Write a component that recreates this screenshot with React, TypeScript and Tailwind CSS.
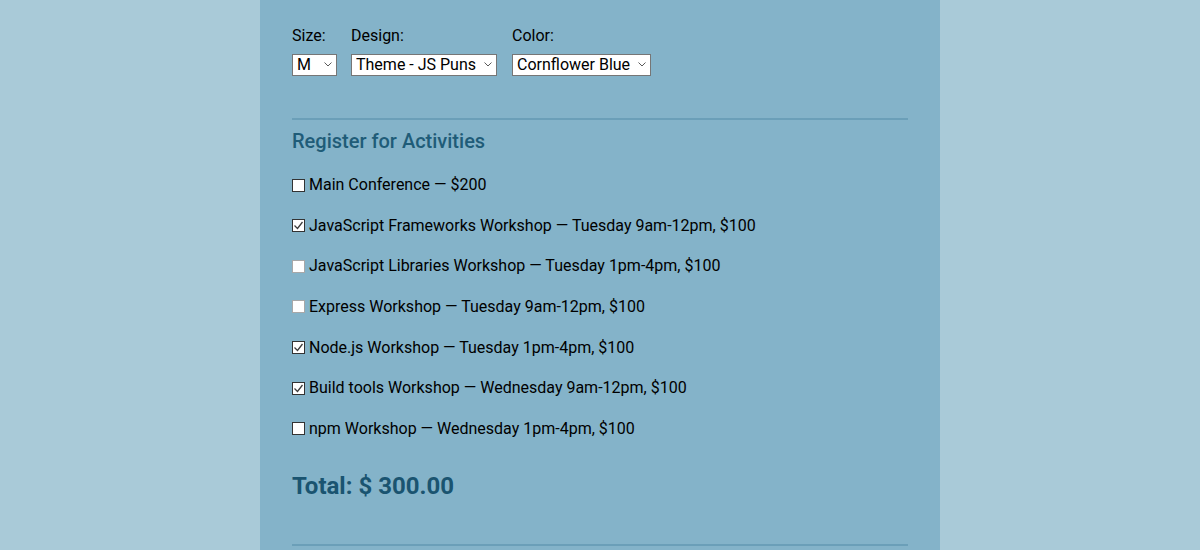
import type { ReactNode } from 'react'

type Activity = {
  id: string
  label: string
  checked: boolean
  dim?: boolean
}

const activities: Activity[] = [
  { id: 'all', label: 'Main Conference — $200', checked: false },
  { id: 'js-frameworks', label: 'JavaScript Frameworks Workshop — Tuesday 9am-12pm, $100', checked: true },
  { id: 'js-libs', label: 'JavaScript Libraries Workshop — Tuesday 1pm-4pm, $100', checked: false, dim: true },
  { id: 'express', label: 'Express Workshop — Tuesday 9am-12pm, $100', checked: false, dim: true },
  { id: 'node', label: 'Node.js Workshop — Tuesday 1pm-4pm, $100', checked: true },
  { id: 'build-tools', label: 'Build tools Workshop — Wednesday 9am-12pm, $100', checked: true },
  { id: 'npm', label: 'npm Workshop — Wednesday 1pm-4pm, $100', checked: false },
]

function Field({ label, width, children }: { label: string; width: string; children: ReactNode }) {
  return (
    <div className="flex flex-col">
      <label className="h-[18px] text-base leading-[18px] text-black">{label}</label>
      <div className={`relative mt-[8px] ${width}`}>
        <select className="h-[22px] w-full appearance-none border border-[#767676] bg-white pl-[4px] text-base leading-[20px] text-black">
          {children}
        </select>
        <svg className="pointer-events-none absolute right-[5px] top-[9px]" width="8" height="5" viewBox="0 0 8 5" fill="none">
          <path d="M0.5 0.5 L4 4 L7.5 0.5" stroke="#5a5a5a" strokeWidth="1" />
        </svg>
      </div>
    </div>
  )
}

function ActivityRow({ activity }: { activity: Activity }) {
  return (
    <label className="flex h-[24px] items-center gap-[4px] text-base text-black">
      <span
        className={`flex h-[13px] w-[13px] shrink-0 items-center justify-center border bg-white ${
          activity.dim ? 'border-[#a8a8a8]' : 'border-[#333333]'
        }`}
      >
        {activity.checked && (
          <svg width="11" height="11" viewBox="0 0 11 11" fill="none">
            <path d="M1.5 5.5 L4.5 8.5 L9.5 2" stroke="#3c3c3c" strokeWidth="1.3" />
          </svg>
        )}
      </span>
      {activity.label}
    </label>
  )
}

export default function App() {
  return (
    <div className="flex h-[550px] w-full justify-center overflow-hidden bg-[#a9cad8] font-['Roboto','Liberation_Sans',sans-serif]">
      <div className="w-[680px] bg-[#84b3c9] px-[32px] pt-[27px]">
        <div className="flex gap-[14px]">
          <Field label="Size:" width="w-[45px]">
            <option>M</option>
            <option>S</option>
            <option>L</option>
            <option>XL</option>
          </Field>
          <Field label="Design:" width="w-[146px]">
            <option>Theme - JS Puns</option>
            <option>Theme - I ♥ JS</option>
          </Field>
          <div className="ml-[1px]">
            <Field label="Color:" width="w-[139px]">
              <option>Cornflower Blue</option>
              <option>Dark Slate Grey</option>
              <option>Gold</option>
            </Field>
          </div>
        </div>

        <hr className="mt-[41px] border-t-2 border-[#6b9fb8]" />

        <h3 className="mt-[9px] h-[24px] text-[20px] font-medium leading-[24px] text-[#1f5c78]">
          Register for Activities
        </h3>

        <div className="mt-[20px] flex flex-col gap-[16.67px]">
          {activities.map((a) => (
            <ActivityRow key={a.id} activity={a} />
          ))}
        </div>

        <p className="mt-[29px] h-[32px] text-[24px] font-bold leading-[32px] text-[#1a5470]">Total: $ 300.00</p>

        <hr className="mt-[42px] border-t-2 border-[#6b9fb8]" />
      </div>
    </div>
  )
}
